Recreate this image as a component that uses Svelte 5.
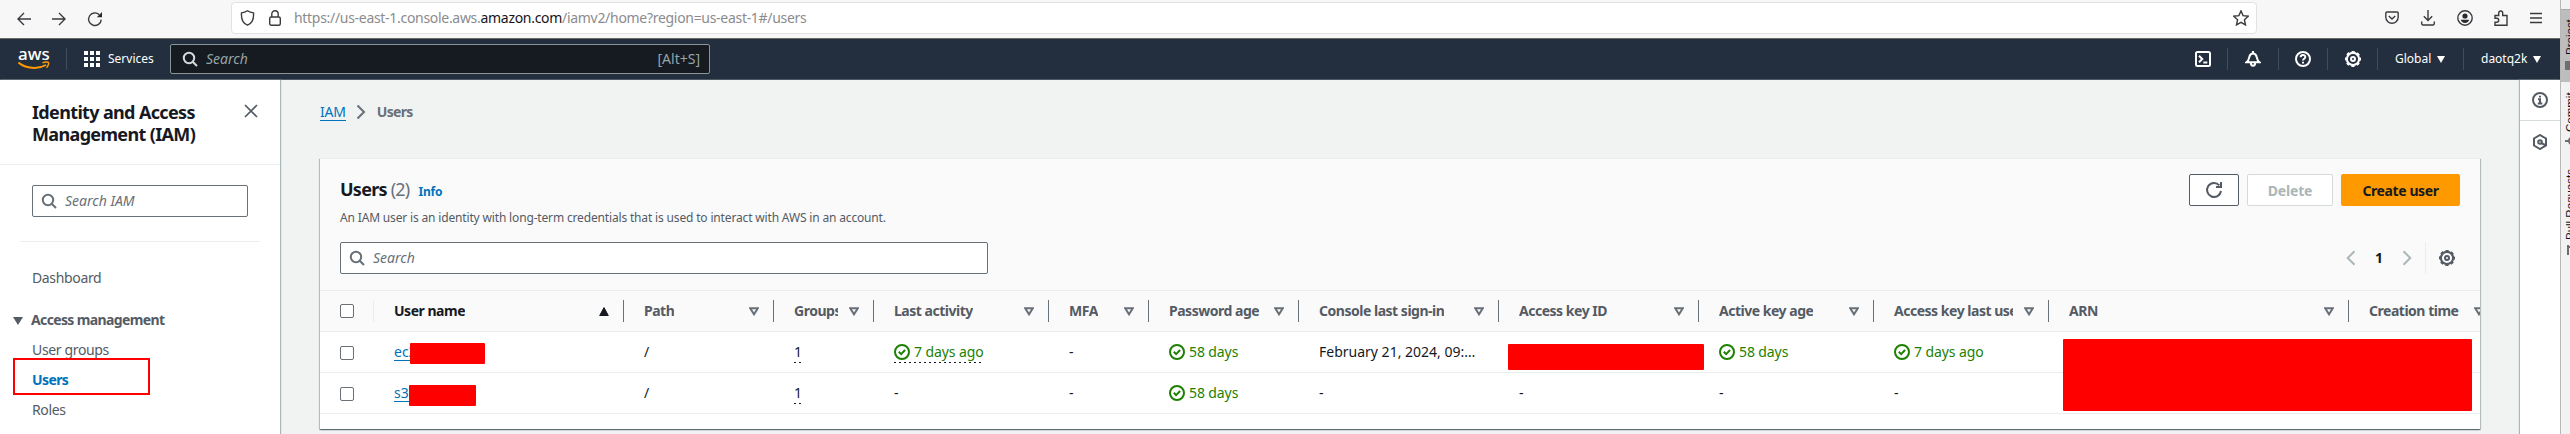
<script>
  const cols = [
    { t: 'User name', w: 250, k: 'up' },
    { t: 'Path', w: 150 },
    { t: 'Groups', w: 100, clip: 44 },
    { t: 'Last activity', w: 175 },
    { t: 'MFA', w: 100 },
    { t: 'Password age', w: 150 },
    { t: 'Console last sign-in', w: 200 },
    { t: 'Access key ID', w: 200 },
    { t: 'Active key age', w: 175 },
    { t: 'Access key last used', w: 175, clip: 119 },
    { t: 'ARN', w: 300 },
    { t: 'Creation time', w: 150 }
  ];
  const rows = [
    { name: 'ec2', hide: 75, off: 36, top: 11, cells: ['/', '1', '+7 days ago', '-', '+58 days', 'February 21, 2024, 09:…', '', '+58 days', '+7 days ago', '', ''] },
    { name: 's3-', hide: 67, off: 35, top: 12, cells: ['/', '1', '-', '-', '+58 days', '-', '-', '-', '-', '', ''] }
  ];
</script>

{#snippet search()}
  <svg width="16" height="16" viewBox="0 0 16 16" fill="none" stroke="currentColor" stroke-width="2"><circle cx="7" cy="7" r="5.2" /><path d="M10.700 10.700 15 15" /></svg>
{/snippet}
{#snippet gear()}
  <svg width="18" height="18" viewBox="0 0 18 18" fill="none" stroke="currentColor"><circle cx="9" cy="9" r="6.100" stroke-width="2.100" /><circle cx="9" cy="9" r="7.300" stroke-width="1.500" stroke-dasharray="3.200 2.530" stroke-dashoffset="1.600" /><circle cx="9" cy="9" r="2" stroke-width="2" /></svg>
{/snippet}
{#snippet ok()}
  <svg width="16" height="16" viewBox="0 0 16 16" fill="none" stroke="#1d8102" stroke-width="2"><circle cx="8" cy="8" r="7" /><path d="m4.800 7.800 2.300 2.300 4-4.100" /></svg>
{/snippet}

<div class="screen">
  <div class="browser">
    <header class="chrome">
      <div class="nav">
        <svg width="14" height="14" viewBox="0 0 14 14"><path d="M14 7H1M7 1 1 7l6 6" /></svg>
        <svg width="14" height="14" viewBox="0 0 14 14"><path d="M0 7h13M7 1l6 6-6 6" /></svg>
        <svg width="16" height="16" viewBox="0 0 16 16"><path d="M14.200 8.600A6.300 6.300 0 1 1 12.300 3.700" /><path class="solid" d="M15 1v5.200H9.800z" /></svg>
      </div>
      <div class="url">
        <svg width="15" height="16" viewBox="0 0 14 16"><path d="M7 .8C5 2.200 3 2.700 1 2.900c-.4 5.300 1.400 10.400 6 12.300 4.600-1.900 6.400-7 6-12.300-2-.2-4-.7-6-2.100z" /></svg>
        <svg class="lock" width="12" height="16" viewBox="0 0 12 16"><rect x=".7" y="7" width="10.600" height="8.200" rx="1.500" /><path d="M2.800 7V4a3.200 3.200 0 0 1 6.400 0v3" /></svg>
        <span class="addr">https://us-east-1.console.aws.<b>amazon.com</b>/iamv2/home?region=us-east-1#/users</span>
        <svg width="16" height="16" viewBox="0 0 16 16"><path d="m8 .9 2.100 4.700 5.200.6-3.900 3.500 1.100 5.200L8 12.300l-4.500 2.600 1.100-5.200L.7 6.200l5.200-.6z" /></svg>
      </div>
      <div class="tools">
        <svg width="14" height="14" viewBox="0 0 14 14"><path d="M2 1h10a1.200 1.200 0 0 1 1.200 1.200V6A6.200 6.200 0 0 1 .8 6V2.200A1.200 1.200 0 0 1 2 1zM3.800 5 7 8l3.200-3" /></svg>
        <svg width="14" height="16" viewBox="0 0 14 16"><path d="M7 0v10.500M2.800 6.300 7 10.500l4.200-4.200M.7 11.500v2a1.500 1.500 0 0 0 1.500 1.500h9.600a1.500 1.500 0 0 0 1.500-1.500v-2" /></svg>
        <svg width="16" height="16" viewBox="0 0 16 16"><circle cx="8" cy="8" r="7.200" /><circle cx="8" cy="6" r="2.600" class="solid" /><path class="solid" d="M3.800 9.800h8.400c-.5 2-2 3.200-4.200 3.200s-3.700-1.200-4.200-3.200z" /></svg>
        <svg width="14" height="16" viewBox="0 0 14 16"><path d="M1 5.500h3.700V3a2 2 0 0 1 4 0v2.500H13v9.800H1v-3h1.700a2 2 0 0 0 0-4H1z" /></svg>
        <svg width="12" height="12" viewBox="0 0 12 12"><path d="M0 1.500h12M0 6h12M0 10.500h12" /></svg>
      </div>
    </header>

    <nav class="aws">
      <div class="logo">
        <span>aws</span>
        <svg width="32" height="9" viewBox="0 0 32 9" fill="none" stroke="#f90"><path d="M.5 1.500C8 7.800 20 8.600 28 4" stroke-width="2" /><path d="M24.500 1.900c2.500-1.300 5.500-1 6-.4.400.8-.2 3.500-2 5.300" stroke-width="1.500" /></svg>
      </div>
      <div class="services">
        <svg width="16" height="16" viewBox="0 0 16 16" fill="#fff"><path d="M0 0h4v4H0zM6 0h4v4H6zM12 0h4v4h-4zM0 6h4v4H0zM6 6h4v4H6zM12 6h4v4h-4zM0 12h4v4H0zM6 12h4v4H6zM12 12h4v4h-4z" /></svg>
        Services
      </div>
      <div class="find">{@render search()}<i>Search</i><span>[Alt+S]</span></div>
      <div class="right">
        <div class="ib" style:width="49px"><svg width="16" height="16" viewBox="0 0 16 16"><rect x="1" y="1" width="14" height="14" rx="1.500" /><path d="m4 4.800 3.200 3.200L4 11.200M8.300 11.500h4" /></svg></div>
        <div class="ib" style:width="51px"><svg width="16" height="16" viewBox="0 0 16 16"><path d="M8 0v2.500M1.500 11.200c2-1.500 2.500-3.200 2.800-5C4.700 3.900 6 2.500 8 2.500s3.300 1.400 3.700 3.700c.3 1.800.8 3.500 2.800 5zM5.800 11.500c0 4.300 4.400 4.300 4.400 0" /></svg></div>
        <div class="ib" style:width="49px"><svg width="16" height="16" viewBox="0 0 16 16"><circle cx="8" cy="8" r="7" /><path d="M5.700 6.200C5.700 3.200 10.300 3.300 10.300 6c0 1.800-2.300 1.700-2.300 3.500M8 10.800v1.700" /></svg></div>
        <div class="ib" style:width="50px">{@render gear()}</div>
        <div class="menu">Global <em></em></div>
        <div class="menu last">daotq2k <em></em></div>
      </div>
    </nav>

    <div class="body">
      <aside>
        <div class="title"><h1>Identity and Access<br />Management (IAM)</h1>
          <svg width="14" height="14" viewBox="0 0 14 14"><path d="m1 1 12 12M13 1 1 13" /></svg></div>
        <div class="box side">{@render search()}<i>Search IAM</i></div>
        <div class="rule"></div>
        <p class="dash">Dashboard</p>
        <p class="group"><em></em>Access management</p>
        <p class="item">User groups</p>
        <p class="item on">Users<span class="mark"></span></p>
        <p class="item">Roles</p>
      </aside>

      <main>
        <div class="crumbs"><a>IAM</a><svg width="10" height="16" viewBox="0 0 10 16"><path d="m1.500 1.500 6.500 6.500-6.500 6.500" /></svg><b>Users</b></div>
        <section class="card">
          <div class="top">
            <div class="hl">
              <h2>Users <span>(2)</span><a>Info</a></h2>
              <p>An IAM user is an identity with long-term credentials that is used to interact with AWS in an account.</p>
              <div class="box wide">{@render search()}<i>Search</i></div>
            </div>
            <div class="hr">
              <div class="btns">
                <button class="ref" aria-label="Refresh"><svg width="18" height="18" viewBox="0 0 18 18"><path d="M16 10A7 7 0 1 1 14.300 4.300M16 1v5h-5" /></svg></button>
                <button class="del">Delete</button>
                <button class="create">Create user</button>
              </div>
              <div class="pager">
                <svg width="10" height="16" viewBox="0 0 10 16"><path d="M8.500 1.200 1.700 8l6.800 6.800" /></svg>
                <b>1</b>
                <svg width="10" height="16" viewBox="0 0 10 16"><path d="M1.500 1.200 8.300 8l-6.800 6.800" /></svg>
                <span class="pref">{@render gear()}</span>
              </div>
            </div>
          </div>
          <div class="table">
            <div class="tr head">
              <div class="chk"><span></span></div>
              {#each cols as c, i}
                <div class="th" class:first={i === 0} style:width="{c.w}px">
                  <span class="lab" style:width={c.clip ? c.clip + 'px' : 'auto'}>{c.t}</span>
                  {#if c.k}
                    <svg width="10" height="9" viewBox="0 0 10 9"><path d="M5 .6 9.300 8.500H.7z" fill="#16191f" stroke="#16191f" /></svg>
                  {:else}
                    <svg width="10" height="9" viewBox="0 0 10 9"><path d="M1.200 1.200h7.600L5 7.300z" fill="none" stroke="#687078" stroke-width="2" /></svg>
                  {/if}
                </div>
              {/each}
            </div>
            {#each rows as r}
              <div class="tr">
                <div class="chk"><span></span></div>
                <div class="td" style:width="250px"><a>{r.name}</a><span class="redact" style:width="{r.hide}px" style:left="{r.off}px" style:top="{r.top}px"></span></div>
                {#each r.cells as v, i}
                  <div class="td" style:width="{cols[i + 1].w}px">
                    {#if v.startsWith('+')}
                      <span class="good" class:dotted={i === 2}>{@render ok()}{v.slice(1)}</span>
                    {:else if i === 1}
                      <span class="dotted">{v}</span>
                    {:else}{v}{/if}
                    {#if i === 6 && v === ''}<span class="redact key"></span>{/if}
                    {#if i === 9 && r.name === 'ec2'}<span class="redact arn"></span>{/if}
                  </div>
                {/each}
              </div>
            {/each}
          </div>
        </section>
      </main>

      <div class="rail">
        <div><svg width="16" height="16" viewBox="0 0 16 16"><circle cx="8" cy="8" r="7" /><path d="M8 3.700v1.800M6 7.300h2v4M5.800 11.500h4.500" /></svg></div>
        <div><svg width="16" height="16" viewBox="0 0 16 16"><path d="m8 1 6 3.500v7L8 15l-6-3.500v-7z" /><circle cx="8" cy="8" r="1.800" /><path d="m9 8.800 5 2.700" /></svg></div>
      </div>
    </div>
  </div>
  <div class="ide">
    <div class="tab active"><span style:height="36px">Project</span><i class="sq"></i></div>
    <div class="tab commit"><span style:height="41px">Commit</span><svg width="12" height="12" viewBox="0 0 12 12" fill="none" stroke="#6e6e6e" stroke-width="2"><circle cx="8" cy="6" r="3" /><path d="M1 6h4" /></svg></div>
    <div class="tab pull"><span style:height="70px">Pull Requests</span><svg width="12" height="12" viewBox="0 0 12 12" fill="none" stroke="#6e6e6e" stroke-width="2"><path d="M4 1v10M4 3h6" /></svg></div>
  </div>
</div>

<style>
  :global(body) { margin: 0; overflow: hidden; }
  * { box-sizing: border-box; }
  .screen { width: 2570px; height: 434px; display: flex; overflow: hidden; background: #f1f3f3; color: #16191f; font: 14px/22px "Noto Sans", "Open Sans", sans-serif; white-space: nowrap; }
  h1, h2, p { margin: 0; }
  em { display: inline-block; width: 0; height: 0; border: 4.500px solid transparent; border-bottom: 0; border-top: 7px solid currentColor; }
  svg { flex: none; display: block; }
  .browser { width: 2560px; flex: none; display: flex; flex-direction: column; }
  .chrome { height: 38px; background: #f7f7f7; display: flex; align-items: center; flex: none; padding-bottom: 2px; }
  .chrome svg { fill: none; stroke: #3b3b3f; stroke-width: 1.400; }
  .chrome .solid { fill: #2b2b2f; stroke: none; }
  .nav { display: flex; gap: 21px; width: 231px; padding: 1px 0 0 17px; align-items: center; flex: none; }
  .url { width: 2026px; height: 32px; border: 1px solid #e2e2e4; border-radius: 4px; background: #fff; display: flex; align-items: center; padding: 0 7px 0 8px; flex: none; }
  .lock { margin: 0 13px 0 14px; }
  .addr { color: #8b8b8e; letter-spacing: -.3px; flex: 1; }
  .addr b { color: #15141a; font-weight: 400; }
  .tools { display: flex; align-items: center; justify-content: space-between; width: 157px; margin-left: 128px; }

  .aws { height: 42px; background: #232f3e; border-top: 1px solid #6b6b62; border-bottom: 1px solid #4d5a66; color: #fff; display: flex; align-items: center; flex: none; }
  .logo { width: 67px; padding-left: 18px; height: 22px; border-right: 1px solid #414d5c; font-weight: 500; line-height: 12px; font-size: 17px; }
  .logo span { display: block; height: 13px; }
  .services { display: flex; align-items: center; gap: 8px; width: 103px; padding-left: 17px; font-size: 12px; }
  .find { width: 540px; height: 30px; background: #161a21; border: 1px solid #879596; border-radius: 2px; display: flex; align-items: center; padding: 0 9px 0 11px; color: #95a5a6; }
  .find svg { color: #d5dbdb; }
  .find i { margin-left: 8px; flex: 1; }
  .right { margin-left: auto; display: flex; align-items: center; height: 24px; }
  .right svg { fill: none; stroke: #fff; stroke-width: 2; }
  .ib { display: flex; justify-content: center; align-items: center; height: 22px; border-right: 1px solid #414d5c; }
  .menu { width: 86px; font-size: 12px; height: 22px; display: flex; align-items: center; padding-left: 17px; gap: 6px; border-right: 1px solid #414d5c; }
  .last { width: 96px; border: 0; }

  .body { display: flex; height: 354px; }
  aside { width: 280px; background: #fff; box-shadow: 1px 0 1px #aab7b8; flex: none; color: #545b64; z-index: 1; }
  .title { height: 85px; border-bottom: 1px solid #eaeded; padding: 21px 22px 0 32px; display: flex; justify-content: space-between; }
  h1 { font-size: 18px; line-height: 22px; color: #16191f; letter-spacing: -.65px; }
  .title svg { margin-top: 3px; stroke: #545b64; stroke-width: 1.700; }
  .box { height: 32px; border: 1px solid #687078; border-radius: 2px; background: #fff; display: flex; align-items: center; padding-left: 8px; color: #687078; }
  .box i { margin-left: 8px; }
  .side { width: 216px; margin: 20px 0 0 32px; }
  .rule { height: 1px; margin: 24px 20px 0; background: #eaeded; }
  .dash { margin: 25px 0 0 32px; letter-spacing: -.35px; }
  .group { margin: 20px 0 0 13px; font-weight: 700; letter-spacing: -.63px; }
  .group em { margin-right: 8px; border-width: 8px 5px 0; }
  .item { margin: 8px 0 0 32px; position: relative; letter-spacing: -.35px; }
  .on { color: #0073bb; font-weight: 700; letter-spacing: -.6px; }
  .mark { position: absolute; left: -19px; top: -11px; width: 137px; height: 37px; border: 2px solid red; }

  main { width: 2240px; padding: 20px 40px 0; flex: none; }
  .crumbs { display: flex; align-items: center; color: #687078; height: 24px; }
  .crumbs svg { margin: 0 11px 0 10px; fill: none; stroke: #687078; stroke-width: 2; }
  .crumbs b { letter-spacing: -.7px; }
  a { color: #0073bb; border-bottom: 1px solid #0073bb; }
  .crumbs a { line-height: 17px; letter-spacing: -.2px; }
  .card { margin-top: 34px; width: 2160px; height: 271px; background: #fff; box-shadow: 0 1px 1px rgba(0, 28, 36, .4), 1px 1px 1px rgba(0, 28, 36, .2), -1px 1px 1px rgba(0, 28, 36, .2); overflow: hidden; }
  .top { height: 133px; background: #fafafa; border-bottom: 1px solid #eaeded; border-top: 1px solid #eaeded; padding: 0 20px; display: flex; justify-content: space-between; }
  h2 { margin-top: 18px; height: 24px; font-size: 18px; line-height: 24px; letter-spacing: -.75px; }
  h2 span { font-weight: 400; color: #687078; }
  h2 a { font-size: 12px; margin-left: 9px; border: 0; letter-spacing: -.2px; }
  .hl p { font-size: 12px; color: #545b64; margin-top: 8px; line-height: 18px; letter-spacing: -.16px; }
  .wide { width: 648px; margin-top: 15px; }
  .btns { display: flex; gap: 8px; margin-top: 15px; }
  button { height: 32px; font: 700 14px "Noto Sans", sans-serif; border: 1px solid #545b64; background: #fff; border-radius: 2px; padding: 0; display: flex; align-items: center; justify-content: center; color: #16191f; }
  .ref { width: 50px; }
  .del { width: 86px; color: #aab7b8; border-color: #d5dbdb; letter-spacing: -.2px; }
  .create { width: 119px; background: #f90; border-color: #f90; letter-spacing: -.4px; }
  .ref svg { fill: none; stroke: #545b64; stroke-width: 2; }
  .pager { display: flex; align-items: center; justify-content: flex-end; height: 32px; margin-top: 36px; }
  .pager > svg { fill: none; stroke: #aab7b8; stroke-width: 2; }
  .pager b { margin: 0 19px; }
  .pref { height: 32px; border-left: 1px solid #eaeded; margin-left: 13px; padding: 7px 4px 0 12px; color: #545b64; }
  .tr { display: flex; height: 41px; border-bottom: 1px solid #eaeded; }
  .head { background: #fafafa; color: #545b64; font-weight: 700; letter-spacing: -.48px; }
  .chk { width: 54px; padding: 14px 0 0 20px; flex: none; position: relative; }
  .head .chk { padding-top: 13px; }
  .head .chk::after, .th::after { content: ''; position: absolute; right: 0; top: 9px; height: 22px; width: 1px; background: #eaeded; }
  .th::after { background: #687078; }
  .chk span { display: block; width: 14px; height: 14px; border: 1px solid #687078; border-radius: 2px; background: #fff; }
  .th, .td { flex: none; padding-left: 20px; position: relative; display: flex; align-items: center; }
  .th { justify-content: space-between; padding-right: 15px; }
  .first { color: #16191f; }
  .lab { overflow: hidden; }
  .td a { line-height: 17px; }
  .redact { position: absolute; background: red; border-radius: 1px; height: 21px; z-index: 2; }
  .key { left: 9px; width: 196px; height: 26px; top: 12px; }
  .arn { left: 14px; width: 409px; height: 72px; top: 7px; }
  .good { color: #1d8102; display: flex; align-items: center; gap: 4px; letter-spacing: -.1px; }
  .dotted { background: repeating-linear-gradient(90deg, #16191f 0 2px, transparent 2px 5px) 0 100% / 100% 1px no-repeat; }

  .rail { width: 40px; background: #fff; box-shadow: -1px 0 1px #aab7b8; }
  .rail div { height: 41px; border-bottom: 1px solid #d5dbdb; display: flex; align-items: center; justify-content: center; }
  .rail div + div { border: 0; }
  .rail svg { fill: none; stroke: #545b64; stroke-width: 2; }
  .ide { width: 10px; flex: none; background: #f2f2f2; border-left: 1px solid #b8b8b8; color: #111; overflow: hidden; font: 11.500px/16px "Liberation Sans", sans-serif; display: flex; flex-direction: column; }
  .tab { display: flex; flex-direction: column; align-items: center; width: 18px; flex: none; gap: 6px; }
  .tab span { writing-mode: vertical-rl; transform: rotate(180deg); width: 16px; }
  .active { margin-top: 9px; height: 73px; padding-top: 9px; background: #bdbdbd; border-top: 1px solid #a8a8a8; }
  .sq { width: 11px; height: 9px; background: #6e6e6e; }
  .commit { margin-top: 9px; height: 79px; gap: 3px; }
  .pull { gap: 4px; }
</style>
